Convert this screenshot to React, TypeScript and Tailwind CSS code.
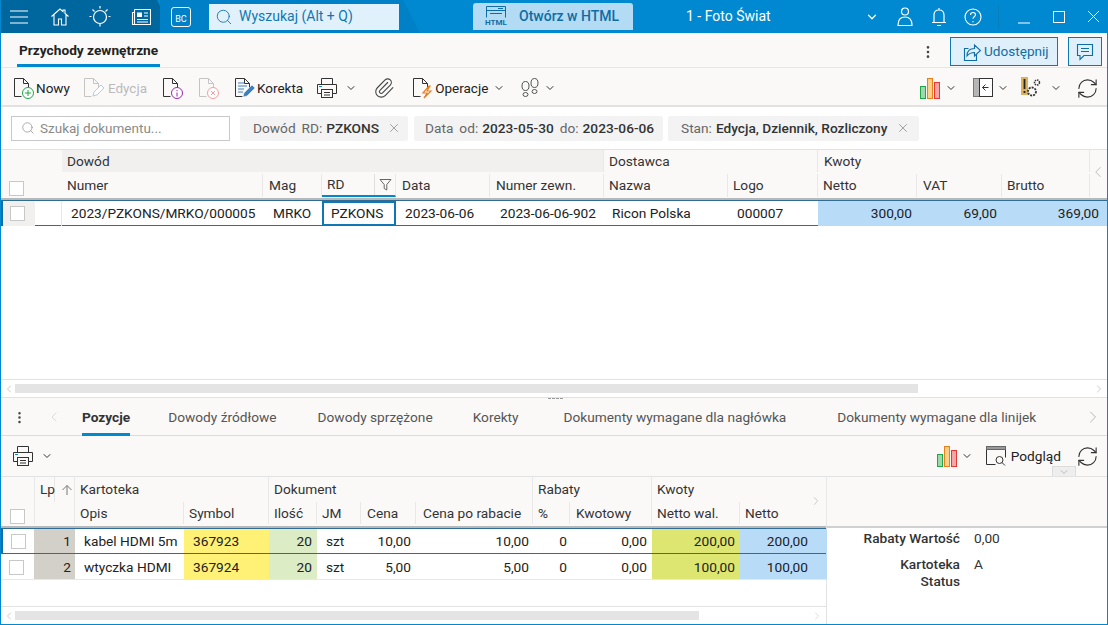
import { ReactNode } from "react";
import clsx from "clsx";
import { ChevronDown, ChevronLeft, ChevronRight, EllipsisVertical, Paperclip, RefreshCw, Search, X } from "lucide-react";

function Check() {
  return <span className="block h-[15px] w-[15px] border border-[#c8c8c8] bg-white" />;
}

function Bars() {
  return (
    <svg width="20" height="21" viewBox="0 0 20 21">
      <rect x="0.5" y="8.5" width="5" height="12" fill="#9fd8a8" stroke="#1ea64a" />
      <rect x="7.5" y="0.5" width="5" height="20" fill="#fbd08a" stroke="#ea7f1e" />
      <rect x="14.5" y="4.5" width="5" height="16" fill="#f6a6a6" stroke="#e53935" />
    </svg>
  );
}

function DocIcon({ faded, children }: { faded?: boolean; children?: ReactNode }) {
  const c = faded ? "#c4c4c4" : "#333333";
  return (
    <svg width="22" height="22" viewBox="0 0 22 22" fill="none" className="shrink-0">
      <path d="M1.5 19.5V1.5h9l5 5v6M1.5 19.5h7M10.5 1.5v5h5" stroke={c} />
      {children}
    </svg>
  );
}

function PrinterIcon() {
  return (
    <svg width="22" height="22" viewBox="0 0 22 22" fill="none" stroke="#333" className="shrink-0">
      <path d="M5.5 7.5v-6h11v6M5.5 16.5h-4v-9h19v9h-4" />
      <rect x="5.5" y="12.5" width="11" height="8" fill="#faf9f8" />
      <path d="M8 15.5h6M8 18h6" />
      <path d="M3 9.5h3" stroke="#0089d0" />
    </svg>
  );
}

function Refresh() {
  return <RefreshCw size={23} strokeWidth={1.15} className="shrink-0 text-[#333]" />;
}

function Chevron({ className }: { className?: string }) {
  return <ChevronDown size={12} strokeWidth={2} className={clsx("shrink-0 text-[#333]", className)} />;
}

function GroupCell({ className, children }: { className?: string; children?: ReactNode }) {
  return <div className={clsx("flex items-center border-r border-[#e8e8e8] pl-[5px] text-[13.7px] text-[#333]", className)}>{children}</div>;
}

function HeadCell({ className, children }: { className?: string; children?: ReactNode }) {
  return <div className={clsx("flex items-center whitespace-nowrap border-r border-[#e8e8e8] pl-[5px] text-[13.7px] text-[#333]", className)}>{children}</div>;
}

function Cell({ className, children }: { className?: string; children?: ReactNode }) {
  return <div className={clsx("flex items-center whitespace-nowrap px-[9px] text-[13.7px] text-[#222]", className)}>{children}</div>;
}

function FilterChip({ className, children }: { className?: string; children: ReactNode }) {
  return <div className={clsx("flex h-[25px] items-center whitespace-nowrap rounded-[2px] bg-[#f3f3f3] text-[13.7px] text-[#666]", className)}>{children}</div>;
}

const upperCols = "grid-cols-[34px_27px_201px_59px_74px_94px_114px_124px_90px_99px_85px_88px_1fr]";
const lowerCols = "grid-cols-[33px_21px_20px_109px_85px_48px_44px_55px_117px_37px_82px_88px_87px]";

const lowerRows = [
  { lp: "1", opis: "kabel HDMI 5m", symbol: "367923", cena: "10,00", wal: "200,00", active: true },
  { lp: "2", opis: "wtyczka HDMI", symbol: "367924", cena: "5,00", wal: "100,00", active: false },
];

export default function App() {
  return (
    <div className="flex h-[625px] w-[1108px] flex-col overflow-hidden border-x border-b border-[#0089d0] bg-white font-['Roboto',sans-serif]">
      <header className="relative -mx-px flex h-[33px] shrink-0 items-center bg-[#0089d0] text-white">
        <div className="absolute left-0 top-0 h-[33px] w-[166px] bg-[#00669e] [clip-path:polygon(0_0,157px_0,166px_55%,162px_100%,0_100%)]" />
        <div className="absolute left-[160px] top-0 h-[33px] w-[260px] bg-[#0081c7] [clip-path:polygon(0_0,243px_0,260px_100%,0_100%)]" />
        <div className="relative flex items-center pl-[9px]">
          <svg width="20" height="14" viewBox="0 0 20 14" stroke="#fff" strokeWidth="1.2"><path d="M1 1h18M1 7h18M1 13h18" /></svg>
          <svg width="20" height="20" viewBox="0 0 20 20" fill="none" stroke="#fff" strokeWidth="1.1" className="ml-[21px]"><path d="M1.5 9.5 10 2l3 2.6V3h2v3.4l3.500 3.100M4 8v10h4.500v-6h3v6H16V8" /></svg>
          <svg width="22" height="24" viewBox="0 0 22 24" fill="none" stroke="#fff" strokeWidth="1.2" className="ml-[19px]"><circle cx="11" cy="12" r="6.500" /><path d="M11 18.500v3M11 1v2.500M3.500 4.500l2 2M18.500 4.500l-2 2M0.500 11.500H2.500M19.500 11.500h2" /></svg>
          <svg width="20" height="18" viewBox="0 0 20 18" fill="none" stroke="#fff" strokeWidth="1.1" className="ml-[20px]"><path d="M3.500 1.500h16v15h-18v-12h2M3.500 1.500v15" /><rect x="6" y="4.500" width="5" height="4.500" fill="#fff" stroke="none" /><path d="M13 5h4M13 8h4M6 11.500h11M6 14h11" /></svg>
          <div className="ml-[20px] flex h-[20px] w-[20px] items-end justify-center rounded-[3px] border border-white pb-[1px] text-[9px] leading-[11px]">BC</div>
          <div className="ml-[18px] flex h-[26px] w-[190px] items-center gap-[6px] bg-[#e1f1fb] pl-[6px] text-[14px] text-[#0f78b4]">
            <Search size={18} strokeWidth={1.2} className="shrink-0" />
            Wyszukaj (Alt + Q)
          </div>
        </div>
        <div className="relative ml-[74px] flex h-[27px] w-[160px] items-center rounded-t-[3px] bg-[#b3dbf3] pl-[10px] text-[14px] font-medium text-[#0f6da5]">
          <span className="mr-[10px] flex h-[22px] w-[26px] flex-col items-center">
            <svg width="22" height="12" viewBox="0 0 22 12" fill="none" stroke="#0f6da5"><path d="M1.500 11.500V0.500h19v11M1.500 4.500h19M13 2.500h5M5 7.500h12" /></svg>
            <span className="mt-[1px] text-[8px] font-bold leading-[8px]">HTML</span>
          </span>
          Otwórz w HTML
        </div>
        <div className="relative ml-[53px] w-[179px] text-[14px]">1 - Foto Świat</div>
        <div className="relative flex items-center">
          <ChevronDown size={14} strokeWidth={2.2} />
          <svg width="16" height="20" viewBox="0 0 16 20" fill="none" stroke="#fff" strokeWidth="1.2" className="ml-[18px]"><circle cx="8" cy="4.500" r="3.500" /><path d="M1 18.500c0-6 2.500-8.500 7-8.500s7 2.500 7 8.500z" /></svg>
          <svg width="16" height="20" viewBox="0 0 16 20" fill="none" stroke="#fff" strokeWidth="1.2" className="ml-[18px]"><path d="M1 15.500h14M3 15.500V8c0-3 2-5 5-5s5 2 5 5v7.500M8 1v2M6 18.500h4" /></svg>
          <svg width="18" height="18" viewBox="0 0 18 18" fill="none" stroke="#fff" strokeWidth="1.1" className="ml-[17px]"><circle cx="9" cy="9" r="8" /><path d="M6.500 7c0-1.500 1-2.500 2.500-2.500s2.500 1 2.500 2.300c0 2-2.500 2-2.500 4M9 13v1.200" /></svg>
          <span className="ml-[16px] h-[22px] w-px bg-[#0a7dbd]" />
          <svg width="14" height="14" viewBox="0 0 14 14" stroke="#fff" strokeWidth="1" className="ml-[18px]"><path d="M1 13h12" /></svg>
          <span className="ml-[22px] h-[12px] w-[12px] border border-white" />
          <svg width="13" height="13" viewBox="0 0 13 13" stroke="#fff" strokeWidth="1" className="ml-[22px]"><path d="M1 1l11 11M12 1 1 12" /></svg>
        </div>
      </header>

      <div className="flex h-[35px] shrink-0 items-end justify-between border-b border-[#e6e6e6] bg-[#faf9f8]">
        <div className="ml-[16px] flex h-[33px] items-center border-b-[3px] border-[#0089d0] px-[2px] pt-[3px] text-[13.7px] font-bold text-[#222]">Przychody zewnętrzne</div>
        <div className="mb-[1px] mr-[5px] flex items-center">
          <EllipsisVertical size={16} className="mr-[14px] text-[#444]" />
          <div className="flex h-[29px] w-[108px] items-center border border-[#0f78b4] bg-[#dff0fb] pl-[12px] text-[13.6px] text-[#0f6da5]">
            <svg width="18" height="18" viewBox="0 0 18 18" fill="none" stroke="#0f6da5" strokeWidth="1.1" className="mr-[3px] shrink-0"><path d="M5.500 5.500h-4v12h12v-6" /><path d="M4 13c0-5 3-7.500 7.500-7.500V2l6 5.500-6 5.500V9.500C8 9.500 6 10.500 4 13z" /></svg>
            Udostępnij
          </div>
          <div className="ml-[10px] flex h-[29px] w-[34px] items-center justify-center border border-[#0f78b4] bg-[#dff0fb]">
            <svg width="18" height="18" viewBox="0 0 18 18" fill="none" stroke="#0f6da5" strokeWidth="1.1"><path d="M1.500 1.500h15v11H8l-4 4v-4H1.500z" /><path d="M5 5.500h8M5 8.500h8" /></svg>
          </div>
        </div>
      </div>

      <div className="flex h-[39px] shrink-0 items-center justify-between border-b-2 border-[#e2e2e2] bg-[#faf9f8] pt-[3px] text-[13.5px] text-[#222]">
        <div className="flex items-center whitespace-nowrap pl-[12px]">
          <DocIcon><circle cx="15" cy="16" r="5.500" fill="#fff" stroke="#1ea64a" /><path d="M15 13v6M12 16h6" stroke="#1ea64a" /></DocIcon>
          <span className="ml-[1px]">Nowy</span>
          <span className="ml-[13px]"><DocIcon faded><path d="M10 19l1-4 7-7 3 3-7 7z" fill="#fff" stroke="#a8d0ee" /></DocIcon></span>
          <span className="ml-[3px] text-[#bbb]">Edycja</span>
          <span className="ml-[15px]"><DocIcon><circle cx="15" cy="16" r="5.500" fill="#fff" stroke="#9c27b0" /><path d="M15 15.500v4M15 13v1" stroke="#9c27b0" /></DocIcon></span>
          <span className="ml-[14px]"><DocIcon faded><circle cx="15" cy="16" r="5.500" fill="#fff" stroke="#f0a0a0" /><path d="M13 14l4 4M17 14l-4 4" stroke="#f0a0a0" /></DocIcon></span>
          <span className="ml-[14px]"><DocIcon><path d="M4 6h6M4 9h9M4 12h6M4 15h5" stroke="#3b7fc4" /><path d="M9 20l1-4 8-8 3 3-8 8z" fill="#3b7fc4" stroke="#fff" strokeWidth="0.500" /></DocIcon></span>
          <span className="ml-[1px]">Korekta</span>
          <span className="ml-[13px]"><PrinterIcon /></span>
          <Chevron className="ml-[7px]" />
          <Paperclip size={22} strokeWidth={1.2} className="ml-[16px] text-[#444]" />
          <span className="ml-[17px]"><DocIcon><path d="M17 9l-6 7h4l-3 5 7-7h-4l3-5z" fill="#fff" stroke="#ea7f1e" strokeWidth="1.200" /></DocIcon></span>
          <span className="ml-[1px]">Operacje</span>
          <Chevron className="ml-[5px]" />
          <svg width="18" height="20" viewBox="0 0 18 20" fill="none" stroke="#555" className="ml-[16px] shrink-0"><ellipse cx="4.500" cy="8" rx="3.500" ry="4.500" /><ellipse cx="4.500" cy="16.500" rx="2.500" ry="2" /><ellipse cx="13.500" cy="5" rx="3.500" ry="4.500" /><ellipse cx="13.500" cy="13.500" rx="2.500" ry="2" /></svg>
          <Chevron className="ml-[5px]" />
        </div>
        <div className="flex items-center pr-[8px]">
          <Bars />
          <Chevron className="ml-[5px]" />
          <svg width="20" height="20" viewBox="0 0 20 20" fill="none" className="ml-[16px] shrink-0"><rect x="0.500" y="0.500" width="6" height="18" fill="#b5b5b5" stroke="#777" /><rect x="6.500" y="0.500" width="13" height="18" fill="#fff" stroke="#333" /><path d="M9.500 9.500h6M9.500 9.500l3-3M9.500 9.500l3 3" stroke="#333" /></svg>
          <Chevron className="ml-[4px]" />
          <svg width="20" height="22" viewBox="0 0 20 22" fill="none" className="ml-[12px] shrink-0"><rect x="0" y="0" width="7" height="18" fill="#dcb35c" /><path d="M3.500 2v10M3.500 14v2" stroke="#222" strokeWidth="1.800" /><circle cx="11" cy="14.500" r="4" stroke="#333" strokeWidth="1.800" strokeDasharray="2 1" /><circle cx="16" cy="5.500" r="2.500" stroke="#333" strokeWidth="1.500" strokeDasharray="1.500 0.800" /></svg>
          <Chevron className="ml-[9px]" />
          <span className="ml-[14px]"><Refresh /></span>
        </div>
      </div>

      <div className="flex h-[42px] shrink-0 items-center bg-white pl-[10px]">
        <div className="flex h-[25px] w-[219px] items-center gap-[5px] border border-[#c9c9c9] pl-[9px] text-[13.5px] text-[#8a8a8a]">
          <Search size={14} strokeWidth={1.2} />
          Szukaj dokumentu...
        </div>
        <FilterChip className="ml-[10px] w-[168px] pl-[13px]">
          Dowód<span className="ml-[6px]">RD:</span><b className="ml-[4px] font-medium text-[#333]">PZKONS</b><X size={14} strokeWidth={1} className="ml-[8px]" />
        </FilterChip>
        <FilterChip className="ml-[6px] w-[249px] pl-[11px]">
          Data<span className="ml-[6px]">od:</span><b className="ml-[4px] font-medium text-[#333]">2023-05-30</b><span className="ml-[6px]">do:</span><b className="ml-[4px] font-medium text-[#333]">2023-06-06</b>
        </FilterChip>
        <FilterChip className="ml-[5px] w-[251px] pl-[13px]">
          Stan:<b className="ml-[4px] font-medium text-[#333]">Edycja, Dziennik, Rozliczony</b><X size={14} strokeWidth={1} className="ml-[9px]" />
        </FilterChip>
      </div>

      <div className="relative shrink-0">
        <div className={clsx("grid h-[25px] border-t border-[#e2e2e2] bg-[#faf9f8] pb-[2px]", upperCols)}>
          <div className="col-span-2" />
          <GroupCell className="col-span-5 bg-[#f1f0ef]">Dowód</GroupCell>
          <GroupCell className="col-span-2">Dostawca</GroupCell>
          <GroupCell className="col-span-3 pl-[6px]">Kwoty</GroupCell>
        </div>
        <div className={clsx("grid h-[26px] border-b-[2px] border-[#b8b8b8] bg-[#faf9f8] pb-[1px]", upperCols)}>
          <div className="col-span-2 flex items-end pb-[1px] pl-[8px]"><Check /></div>
          <HeadCell>Numer</HeadCell>
          <HeadCell className="pl-[6px]">Mag</HeadCell>
          <HeadCell className="justify-between border-b-2 border-b-[#0089d0]">
            RD
            <span className="flex h-full w-[21px] items-center justify-center border-l border-[#e0e0e0]">
              <svg width="13" height="13" viewBox="0 0 13 13" fill="none" stroke="#666"><path d="M1 1.500h11L7.800 6.500v5.500l-2.600-1.500v-4z" /></svg>
            </span>
          </HeadCell>
          <HeadCell className="pl-[6px]">Data</HeadCell>
          <HeadCell className="pl-[6px]">Numer zewn.</HeadCell>
          <HeadCell>Nazwa</HeadCell>
          <HeadCell>Logo</HeadCell>
          <HeadCell>Netto</HeadCell>
          <HeadCell className="pl-[6px]">VAT</HeadCell>
          <HeadCell>Brutto</HeadCell>
        </div>
        <ChevronLeft size={18} strokeWidth={1} className="absolute right-[0px] top-[14px] text-[#aaa]" />
      </div>
      <div className={clsx("grid h-[26px] shrink-0 border-y border-[#2f6d96]", upperCols)}>
        <div className="flex items-center border-l-2 border-[#0f6da5] bg-[#f1f0ef] pl-[7px]"><Check /></div>
        <div className="border-r border-[#e8e8e8]" />
        <Cell>2023/PZKONS/MRKO/000005</Cell>
        <Cell className="pl-[10px]">MRKO</Cell>
        <Cell className="border-2 border-[#0f78b4] pl-[7px]">PZKONS</Cell>
        <Cell>2023-06-06</Cell>
        <Cell className="pl-[10px]">2023-06-06-902</Cell>
        <Cell className="pl-[8px]">Ricon Polska</Cell>
        <Cell>000007</Cell>
        <Cell className="justify-end bg-[#b8dcf8] pr-[5px]">300,00</Cell>
        <Cell className="justify-end bg-[#b8dcf8] pr-[5px]">69,00</Cell>
        <Cell className="col-span-2 justify-end bg-[#b8dcf8] pr-[8px]">369,00</Cell>
      </div>
      <div className="min-h-0 flex-1 border-b border-[#e2e2e2]" />

      <div className="flex h-[18px] shrink-0 items-center border-b border-[#e2e2e2] pl-[2px]">
        <ChevronLeft size={12} className="text-[#ccc]" />
        <div className="h-[9px] w-[903px] bg-[#e4e4e4]" />
        <ChevronRight size={12} className="ml-auto mr-[2px] text-[#ccc]" />
      </div>

      <div className="relative flex h-[38px] shrink-0 items-center whitespace-nowrap border-b border-[#dcdcdc] bg-[#faf9f8] pt-[1px] text-[13.7px] text-[#555]">
        <span className="absolute left-[547px] top-0 h-[1px] w-[15px] border-t border-dashed border-[#999]" />
        <EllipsisVertical size={15} className="ml-[11px] text-[#444]" />
        <ChevronLeft size={16} strokeWidth={1} className="ml-[19px] text-[#ccc]" />
        <div className="ml-[20px] flex h-[37px] items-center border-b-[3px] border-[#0089d0] pt-[3px] font-bold text-[#333]">Pozycje</div>
        <span className="ml-[38px]">Dowody źródłowe</span>
        <span className="ml-[41px]">Dowody sprzężone</span>
        <span className="ml-[40px]">Korekty</span>
        <span className="ml-[45px]">Dokumenty wymagane dla nagłówka</span>
        <span className="ml-[51px]">Dokumenty wymagane dla linijek</span>
        <ChevronRight size={20} strokeWidth={1} className="ml-[47px] text-[#aaa]" />
      </div>

      <div className="relative flex h-[41px] shrink-0 items-center justify-between border-b border-[#e2e2e2] bg-[#faf9f8] text-[13.7px] text-[#222]">
        <div className="flex items-center pl-[11px]">
          <PrinterIcon />
          <Chevron className="ml-[7px]" />
        </div>
        <div className="flex items-center pr-[8px]">
          <Bars />
          <Chevron className="ml-[4px]" />
          <svg width="20" height="20" viewBox="0 0 20 20" fill="none" stroke="#333" className="ml-[13px] shrink-0"><path d="M0.500 3.500h19v8M0.500 3.500v15h9" /><rect x="0.500" y="0.500" width="19" height="3" fill="#999" stroke="#666" /><circle cx="13.500" cy="14" r="3.500" /><path d="M16 16.500l3 3" /></svg>
          <span className="ml-[5px]">Podgląd</span>
          <span className="ml-[15px]"><Refresh /></span>
        </div>
        <span className="absolute bottom-0 right-[31px] flex h-[10px] w-[24px] items-center justify-center border border-b-0 border-[#dcdcdc] bg-[#eeeeee]">
          <ChevronDown size={12} strokeWidth={1} className="text-[#888]" />
        </span>
      </div>

      <div className="flex h-[147px] shrink-0">
        <div className="relative flex w-[826px] flex-col border-r border-[#e2e2e2]">
          <div className={clsx("grid h-[25px] shrink-0 bg-[#faf9f8]", lowerCols)}>
            <div />
            <GroupCell className="border-l border-[#e8e8e8] pl-[2px]">Lp</GroupCell>
            <GroupCell className="justify-center pl-0">
              <svg width="12" height="12" viewBox="0 0 12 12" fill="none" stroke="#777"><path d="M6 11V1.500M1.500 6 6 1.500 10.500 6" /></svg>
            </GroupCell>
            <GroupCell className="col-span-2">Kartoteka</GroupCell>
            <GroupCell className="col-span-4">Dokument</GroupCell>
            <GroupCell className="col-span-2">Rabaty</GroupCell>
            <GroupCell className="col-span-2">Kwoty</GroupCell>
          </div>
          <div className={clsx("grid h-[26px] shrink-0 border-b-[2px] border-[#b8b8b8] bg-[#faf9f8] pb-[2px]", lowerCols)}>
            <div className="flex items-end pl-[9px]"><Check /></div>
            <div className="col-span-2 border-x border-[#e8e8e8]" />
            <HeadCell>Opis</HeadCell>
            <HeadCell>Symbol</HeadCell>
            <HeadCell>Ilość</HeadCell>
            <HeadCell>JM</HeadCell>
            <HeadCell className="pl-[6px]">Cena</HeadCell>
            <HeadCell className="pl-[7px]">Cena po rabacie</HeadCell>
            <HeadCell>%</HeadCell>
            <HeadCell className="pl-[6px]">Kwotowy</HeadCell>
            <HeadCell>Netto wal.</HeadCell>
            <HeadCell>Netto</HeadCell>
          </div>
          <ChevronRight size={14} strokeWidth={1} className="absolute left-[808px] top-[17px] text-[#aaa]" />
          {lowerRows.map((row) => (
            <div key={row.lp} className={clsx("grid h-[26px] shrink-0", row.active ? "border-y border-[#2f6d96]" : "border-b border-[#e8e8e8] [&>div]:pt-[1px]", lowerCols)}>
              <div className={clsx("flex items-center pl-[8px]", row.active && "border-l-2 border-[#0f6da5] pl-[6px]")}><Check /></div>
              <Cell className="col-span-2 justify-end bg-[#d3cfc9] pr-[4px]">{row.lp}</Cell>
              <Cell>{row.opis}</Cell>
              <Cell className="bg-[#fff176]">{row.symbol}</Cell>
              <Cell className="justify-end bg-[#dcecc4] pr-[5px]">20</Cell>
              <Cell>szt</Cell>
              <Cell className="justify-end pr-[5px]">{row.cena}</Cell>
              <Cell className="justify-end pr-[4px]">{row.cena}</Cell>
              <Cell className="justify-end pr-[3px]">0</Cell>
              <Cell className="justify-end pr-[5px]">0,00</Cell>
              <Cell className="justify-end bg-[#dde670] pr-[5px]">{row.wal}</Cell>
              <Cell className="justify-end bg-[#b8dcf8] pr-[19px]">{row.wal}</Cell>
            </div>
          ))}
          <div className="min-h-0 flex-1 border-b border-[#e2e2e2]" />
          <div className="flex h-[17px] shrink-0 items-center pl-[2px]">
            <ChevronLeft size={12} className="text-[#ccc]" />
            <div className="h-[9px] w-[684px] bg-[#e4e4e4]" />
            <ChevronRight size={12} className="ml-auto mr-[3px] text-[#ddd]" />
          </div>
        </div>
        <div className="flex-1">
          <div className="h-[51px] border-b-[2px] border-[#d0d0d0] bg-[#faf9f8]" />
          <div className="grid grid-cols-[133px_1fr] gap-x-[14px] text-[13.7px] text-[#333]">
            <div className="h-[28px] text-right font-medium">Rabaty Wartość</div>
            <div>0,00</div>
            <div className="text-right font-medium leading-[17px]">Kartoteka<br />Status</div>
            <div className="leading-[17px]">A</div>
          </div>
        </div>
      </div>
    </div>
  );
}
